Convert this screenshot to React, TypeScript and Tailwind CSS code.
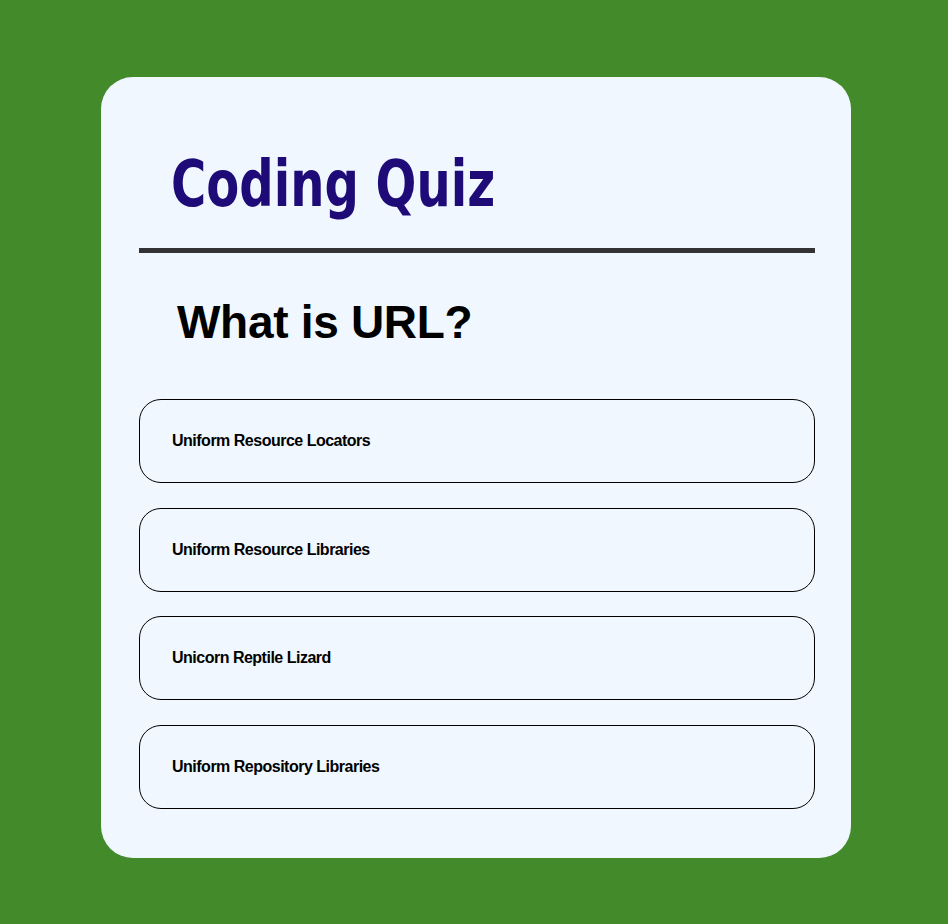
const options = [
  "Uniform Resource Locators",
  "Uniform Resource Libraries",
  "Unicorn Reptile Lizard",
  "Uniform Repository Libraries",
];

export default function App() {
  return (
    <div className="min-h-screen bg-[#438a2a] pt-[77px] pl-[101px]">
      <div className="w-[750px] rounded-[32px] bg-[#f0f7ff] pl-[38px] pr-[36px] pt-[75px] pb-[49px]">
        <h1
          className="ml-[32px] w-fit origin-left scale-x-[0.835] text-[64px] font-bold leading-none text-[#1e0b78]"
          style={{ fontFamily: '"DejaVu Sans Condensed", "Liberation Sans", Arial, sans-serif' }}
        >
          Coding Quiz
        </h1>
        <div className="mt-[32px] h-[5px] w-full bg-[#333336]" />
        <h2
          className="mt-[46px] pl-[38px] text-[46px] font-bold leading-none tracking-[-0.3px] text-black"
          style={{ fontFamily: '"Liberation Sans", Arial, sans-serif' }}
        >
          What is URL?
        </h2>
        <div className="mt-[54px] flex flex-col gap-[24.5px]">
          {options.map((opt) => (
            <button
              key={opt}
              className="flex h-[84px] w-full items-center rounded-[22px] border border-black px-[32px] text-left text-[16px] font-bold tracking-[-0.5px] text-black"
              style={{ fontFamily: '"Liberation Sans", Arial, sans-serif' }}
            >
              {opt}
            </button>
          ))}
        </div>
      </div>
    </div>
  );
}
